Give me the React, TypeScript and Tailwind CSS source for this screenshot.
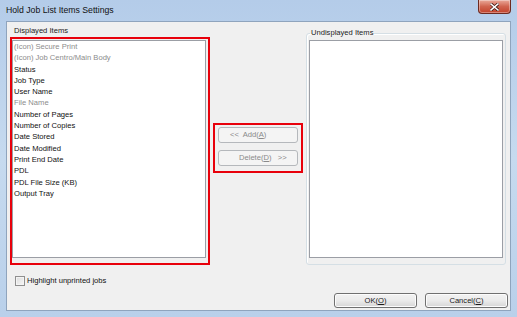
import React from "react";

const ITEMS: { label: string; dim?: boolean }[] = [
  { label: "(Icon) Secure Print", dim: true },
  { label: "(Icon) Job Centro/Main Body", dim: true },
  { label: "Status" },
  { label: "Job Type" },
  { label: "User Name" },
  { label: "File Name", dim: true },
  { label: "Number of Pages" },
  { label: "Number of Copies" },
  { label: "Date Stored" },
  { label: "Date Modified" },
  { label: "Print End Date" },
  { label: "PDL" },
  { label: "PDL File Size (KB)" },
  { label: "Output Tray" },
];

const FONT = "font-['Segoe_UI','Liberation_Sans',Arial,sans-serif]";

function CloseButton() {
  return (
    <div className="mr-[6px] flex h-[14px] w-[33px] items-center justify-center rounded-b-[4px] border border-t-0 border-[#6d2a20] bg-gradient-to-b from-[#e9a99a] via-[#d0644f] to-[#c2412a] shadow-[inset_0_0_0_1px_rgba(255,255,255,0.35)]">
      <svg width="9" height="8" viewBox="0 0 9 8">
        <path
          d="M1 1 L8 7 M8 1 L1 7"
          stroke="#3a1510"
          strokeWidth={3}
          strokeLinecap="square"
        />
        <path
          d="M1 1 L8 7 M8 1 L1 7"
          stroke="#ffffff"
          strokeWidth={1.6}
          strokeLinecap="square"
        />
      </svg>
    </div>
  );
}

function WinButton({
  children,
  disabled,
  className = "",
}: {
  children: React.ReactNode;
  disabled?: boolean;
  className?: string;
}) {
  return (
    <div
      className={`flex items-center rounded-[3px] border text-[7.6px] leading-none ${
        disabled
          ? "border-[#b5b8bc] bg-[#f4f4f4] text-[#8a8a8a]"
          : "border-[#707070] bg-gradient-to-b from-[#f2f2f2] via-[#ebebeb] to-[#d6d6d6] text-[#1a1a1a] shadow-[inset_0_0_0_1px_#fcfcfc]"
      } ${className}`}
    >
      {children}
    </div>
  );
}

export default function App() {
  return (
    <div
      className={`${FONT} flex h-[317px] w-[517px] flex-col bg-gradient-to-b from-[#b4cce9] via-[#c6daef] to-[#b9d0ea]`}
    >
      {/* Title bar */}
      <div className="flex h-[21px] shrink-0 items-start">
        <span className="ml-[6px] mt-[4px] flex-1 text-[8.7px] leading-[12px] text-[#111]">
          Hold Job List Items Settings
        </span>
        <CloseButton />
      </div>

      {/* Client area */}
      <div className="mx-[6px] mb-[6px] flex flex-1 flex-col border border-[#8fa4bd] bg-[#f0f0f0] text-[7.6px] text-[#1b1b1b]">
        <div className="flex h-[244px] pt-[3px]">
          {/* Displayed items */}
          <div className="ml-[3px] flex w-[200px] flex-col">
            <div className="h-[12px] pl-[4px] leading-[12px] text-[#222]">
              Displayed Items
            </div>
            <div className="h-[228px] border-2 border-[#e8000b] pb-[5px] pr-[2px] pt-[1px]">
              <div className="h-full border border-[#9b9ea5] bg-white pl-[1px]">
                {ITEMS.map((it) => (
                  <div
                    key={it.label}
                    className={`h-[11.3px] whitespace-nowrap leading-[11.3px] ${
                      it.dim ? "text-[#8c8c8c]" : "text-[#111]"
                    }`}
                  >
                    {it.label}
                  </div>
                ))}
              </div>
            </div>
          </div>

          {/* Move buttons */}
          <div className="ml-[3px] mt-[98px] flex h-[50px] w-[90px] flex-col gap-[7px] self-start border-2 border-[#e8000b] px-[3px] pt-[2px]">
            <WinButton disabled className="h-[16px] pl-[11px]">
              &lt;&lt;&nbsp; Add(<span className="underline">A</span>)
            </WinButton>
            <WinButton disabled className="h-[16px] pl-[20px]">
              Delete(<span className="underline">D</span>)&nbsp;&nbsp; &gt;&gt;
            </WinButton>
          </div>

          {/* Undisplayed items */}
          <fieldset className="ml-[3px] mt-[3px] h-[237px] w-[200px] rounded-[3px] border border-[#d5dfe5] shadow-[inset_1px_1px_0_#fff]">
            <legend className="ml-[3px] px-[1px] leading-[10px] text-[#222]">
              Undisplayed Items
            </legend>
            <div className="ml-[2px] mt-[2px] h-[218px] w-[194px] border border-[#9b9ea5] bg-white" />
          </fieldset>
        </div>

        {/* Highlight checkbox */}
        <div className="mt-[10px] flex h-[10px] items-center gap-[2px] pl-[8px]">
          <div className="h-[10px] w-[10px] border border-[#8f8f8f] bg-gradient-to-br from-[#dcdcdc] to-[#f7f7f7] shadow-[inset_0_0_0_1px_#f4f4f4]" />
          <span className="leading-[10px] text-[#111]">Highlight unprinted jobs</span>
        </div>

        {/* Dialog buttons */}
        <div className="mt-[7px] flex justify-end gap-[8px] pr-[2px]">
          <WinButton className="h-[15px] w-[83px] justify-center">
            OK(<span className="underline">O</span>)
          </WinButton>
          <WinButton className="h-[15px] w-[83px] justify-center">
            Cancel(<span className="underline">C</span>)
          </WinButton>
        </div>
      </div>
    </div>
  );
}
